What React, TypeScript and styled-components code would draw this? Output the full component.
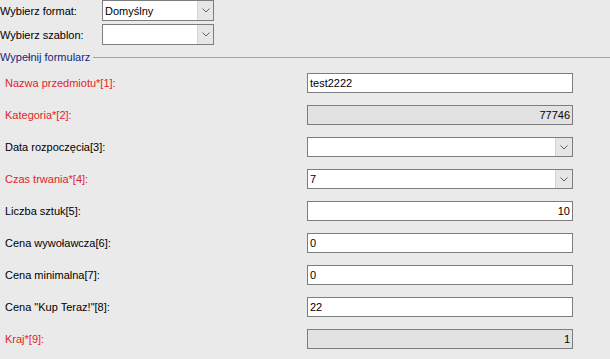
import React from "react";
import styled, { createGlobalStyle } from "styled-components";

const Global = createGlobalStyle`
  html, body {
    margin: 0;
    padding: 0;
    background: #eaeaea;
    font-family: "Liberation Sans", Arial, sans-serif;
    font-size: 11px;
    color: #000;
  }
  #root { width: 610px; height: 359px; overflow: hidden; }
`;

const Page = styled.div`
  width: 610px;
  height: 359px;
  background: #eaeaea;
  overflow: hidden;
`;

const TopGrid = styled.div`
  display: grid;
  grid-template-columns: 102px 112px;
  grid-auto-rows: 21px;
  row-gap: 3px;
`;

const TopLabel = styled.div`
  display: flex;
  align-items: center;
  white-space: nowrap;
`;

const Legend = styled.div`
  display: flex;
  align-items: center;
  height: 13px;
  margin-top: 5px;
  color: #1b1b80;
  white-space: nowrap;
`;

const LegendLine = styled.div`
  flex: 1;
  height: 1px;
  background: #a3a3a3;
  margin-left: 3px;
  margin-top: 1px;
`;

const Fields = styled.div`
  display: flex;
  flex-direction: column;
  gap: 12px;
  margin-top: 10px;
`;

const Row = styled.div`
  display: grid;
  grid-template-columns: 307px 266px;
  height: 20px;
`;

const FieldLabel = styled.div<{ $required?: boolean }>`
  display: flex;
  align-items: center;
  padding-left: 5px;
  color: ${(p) => (p.$required ? "#e3222b" : "#000")};
  white-space: nowrap;
`;

const Box = styled.div<{ $disabled?: boolean; $right?: boolean }>`
  box-sizing: border-box;
  height: 100%;
  border: 1px solid #7d7d7d;
  background: ${(p) => (p.$disabled ? "#e2e2e2" : "#fff")};
  display: flex;
  align-items: center;
  justify-content: ${(p) => (p.$right ? "flex-end" : "flex-start")};
  padding: 0 2px;
  white-space: nowrap;
`;

const Combo = styled.div`
  box-sizing: border-box;
  height: 100%;
  border: 1px solid #7d7d7d;
  background: #fff;
  display: flex;
  align-items: stretch;
`;

const ComboText = styled.div`
  flex: 1;
  display: flex;
  align-items: center;
  padding-left: 2px;
`;

const DropButton = styled.div<{ $w: number }>`
  width: ${(p) => p.$w}px;
  background: #e6e6e6;
  border-left: 1px solid #d4d4d4;
  display: flex;
  align-items: center;
  justify-content: center;
`;

const Chevron = () => (
  <svg width="8" height="5" viewBox="0 0 8 5">
    <path d="M0.5 0.5 L4 4 L7.5 0.5" fill="none" stroke="#606060" strokeWidth="1" />
  </svg>
);

type Field = {
  label: string;
  required?: boolean;
  kind: "text" | "combo";
  value?: string;
  disabled?: boolean;
  right?: boolean;
};

const fields: Field[] = [
  { label: "Nazwa przedmiotu*[1]:", required: true, kind: "text", value: "test2222" },
  { label: "Kategoria*[2]:", required: true, kind: "text", value: "77746", disabled: true, right: true },
  { label: "Data rozpoczęcia[3]:", kind: "combo", value: "" },
  { label: "Czas trwania*[4]:", required: true, kind: "combo", value: "7" },
  { label: "Liczba sztuk[5]:", kind: "text", value: "10", right: true },
  { label: "Cena wywoławcza[6]:", kind: "text", value: "0" },
  { label: "Cena minimalna[7]:", kind: "text", value: "0" },
  { label: "Cena \"Kup Teraz!\"[8]:", kind: "text", value: "22" },
  { label: "Kraj*[9]:", required: true, kind: "text", value: "1", disabled: true, right: true },
];

export default function App() {
  return (
    <Page>
      <Global />
      <TopGrid>
        <TopLabel>Wybierz format:</TopLabel>
        <Combo>
          <ComboText>Domyślny</ComboText>
          <DropButton $w={15}>
            <Chevron />
          </DropButton>
        </Combo>
        <TopLabel>Wybierz szablon:</TopLabel>
        <Combo>
          <ComboText />
          <DropButton $w={15}>
            <Chevron />
          </DropButton>
        </Combo>
      </TopGrid>
      <Legend>
        Wypełnij formularz
        <LegendLine />
      </Legend>
      <Fields>
        {fields.map((f) => (
          <Row key={f.label}>
            <FieldLabel $required={f.required}>{f.label}</FieldLabel>
            {f.kind === "combo" ? (
              <Combo>
                <ComboText>{f.value}</ComboText>
                <DropButton $w={16}>
                  <Chevron />
                </DropButton>
              </Combo>
            ) : (
              <Box $disabled={f.disabled} $right={f.right}>
                {f.value}
              </Box>
            )}
          </Row>
        ))}
      </Fields>
    </Page>
  );
}
